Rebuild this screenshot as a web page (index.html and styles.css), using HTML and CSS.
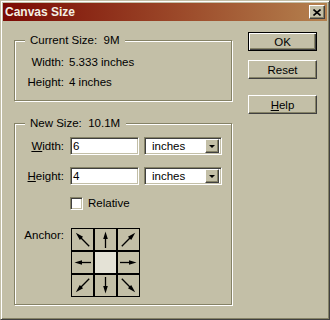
FILE: index.html
```html
<!DOCTYPE html>
<html>
<head>
<meta charset="utf-8">
<link rel="stylesheet" href="styles.css">
</head>
<body>
<div class="window">
  <div class="titlebar">
    <span class="title">Canvas Size</span>
    <span class="close"><svg width="8" height="7" viewBox="0 0 8 7"><path d="M0.5 0.5 L7.5 6.5 M7.5 0.5 L0.5 6.5" stroke="#000" stroke-width="1.6" fill="none"/></svg></span>
  </div>
  <div class="main">
    <div class="left">
      <div class="group">
        <div class="legend">Current Size:&nbsp; 9M</div>
        <div class="info">
          <span class="lbl">Width:</span><span>5.333 inches</span>
          <span class="lbl">Height:</span><span>4 inches</span>
        </div>
      </div>
      <div class="group">
        <div class="legend">New Size:&nbsp; 10.1M</div>
        <div class="form">
          <div class="row">
            <span class="lbl"><u>W</u>idth:</span>
            <div class="field">6</div>
            <div class="select"><span class="sel-text">inches</span><span class="drop"><span class="tri"></span></span></div>
          </div>
          <div class="row r2">
            <span class="lbl"><u>H</u>eight:</span>
            <div class="field">4</div>
            <div class="select"><span class="sel-text">inches</span><span class="drop"><span class="tri"></span></span></div>
          </div>
          <div class="row r3">
            <span class="lbl"></span>
            <span class="checkbox"></span><span>Relative</span>
          </div>
          <div class="row r4">
            <span class="lbl">Anchor:</span>
            <div class="anchor">
              <div class="cell"><svg viewBox="0 0 21 21"><g transform="rotate(-45 10.5 10.5)"><path d="M10.5 20 V6" stroke="#000" stroke-width="1.3"/><path d="M10.5 1 L12.8 9 L8.2 9 Z" fill="#000"/></g></svg></div>
              <div class="cell"><svg viewBox="0 0 21 21"><path d="M10.5 19 V7" stroke="#000" stroke-width="1.3"/><path d="M10.5 2.5 L12.8 10 L8.2 10 Z" fill="#000"/></svg></div>
              <div class="cell"><svg viewBox="0 0 21 21"><g transform="rotate(45 10.5 10.5)"><path d="M10.5 20 V6" stroke="#000" stroke-width="1.3"/><path d="M10.5 1 L12.8 9 L8.2 9 Z" fill="#000"/></g></svg></div>
              <div class="cell"><svg viewBox="0 0 21 21"><g transform="rotate(-90 10.5 10.5)"><path d="M10.5 19 V7" stroke="#000" stroke-width="1.3"/><path d="M10.5 2.5 L12.8 10 L8.2 10 Z" fill="#000"/></g></svg></div>
              <div class="cell center"></div>
              <div class="cell"><svg viewBox="0 0 21 21"><g transform="rotate(90 10.5 10.5)"><path d="M10.5 19 V7" stroke="#000" stroke-width="1.3"/><path d="M10.5 2.5 L12.8 10 L8.2 10 Z" fill="#000"/></g></svg></div>
              <div class="cell"><svg viewBox="0 0 21 21"><g transform="rotate(-135 10.5 10.5)"><path d="M10.5 20 V6" stroke="#000" stroke-width="1.3"/><path d="M10.5 1 L12.8 9 L8.2 9 Z" fill="#000"/></g></svg></div>
              <div class="cell"><svg viewBox="0 0 21 21"><g transform="rotate(180 10.5 10.5)"><path d="M10.5 19 V7" stroke="#000" stroke-width="1.3"/><path d="M10.5 2.5 L12.8 10 L8.2 10 Z" fill="#000"/></g></svg></div>
              <div class="cell"><svg viewBox="0 0 21 21"><g transform="rotate(135 10.5 10.5)"><path d="M10.5 20 V6" stroke="#000" stroke-width="1.3"/><path d="M10.5 1 L12.8 9 L8.2 9 Z" fill="#000"/></g></svg></div>
            </div>
          </div>
        </div>
      </div>
    </div>
    <div class="buttons">
      <button class="btn default">OK</button>
      <button class="btn reset">Reset</button>
      <button class="btn help"><u>H</u>elp</button>
    </div>
  </div>
</div>
</body>
</html>
```

FILE: styles.css
```css
* { box-sizing: border-box; }

body {
  margin: 0;
  font-family: "Liberation Sans", Arial, sans-serif;
  font-size: 11.5px;
  color: #000;
  background: #c3bfa7;
}

.window {
  width: 330px;
  height: 320px;
  background: #c3bfa7;
  border: 1px solid;
  border-color: #c3bfa7 #404040 #404040 #c3bfa7;
  box-shadow: inset 1px 1px #fff, inset -1px -1px #858266;
  padding: 2px;
  display: flex;
  flex-direction: column;
}

.titlebar {
  height: 18px;
  background: linear-gradient(to right, #7b0a04, #9c4a2a 55%, #b4814e);
  display: flex;
  align-items: center;
  justify-content: space-between;
  padding: 0 2px;
}

.title {
  color: #f4f0e4;
  font-weight: bold;
  font-size: 12px;
}

.close {
  width: 16px;
  height: 14px;
  background: #c3bfa7;
  border: 1px solid;
  border-color: #fff #404040 #404040 #fff;
  box-shadow: inset -1px -1px #858266;
  display: flex;
  align-items: center;
  justify-content: center;
}

.close svg { display: block; }

.main {
  display: flex;
  gap: 16px;
  padding: 11px 0 0 11px;
}

.left {
  width: 218px;
  padding-top: 8px;
  display: flex;
  flex-direction: column;
  gap: 22px;
}

.group {
  border: 1px solid #858266;
  box-shadow: inset 1px 1px #fff, 1px 1px #fff;
}

.legend {
  margin: -8px 0 0 10px;
  padding: 0 6px 0 5px;
  background: #c3bfa7;
  width: max-content;
  line-height: 14px;
}

.info {
  display: grid;
  grid-template-columns: 49px auto;
  column-gap: 5px;
  row-gap: 6px;
  margin-top: 8px;
  padding-bottom: 11px;
  line-height: 14px;
}

.lbl { text-align: right; }

.form {
  display: flex;
  flex-direction: column;
  margin-top: 7px;
  padding-bottom: 7px;
}

.row {
  display: flex;
  align-items: center;
  line-height: 14px;
}

.row .lbl {
  width: 49px;
  margin-right: 6px;
  flex: none;
}

.r2 { margin-top: 12px; }
.r3 { margin-top: 11px; }
.r4 { margin-top: 18px; align-items: flex-start; }

.field {
  width: 69px;
  height: 18px;
  background: #fff;
  border: 1px solid;
  border-color: #858266 #fff #fff #858266;
  box-shadow: inset 1px 1px #404040, inset -1px -1px #c3bfa7;
  padding: 0 2px 0 2px;
  line-height: 16px;
  margin-right: 5px;
}

.select {
  width: 78px;
  height: 18px;
  background: #fff;
  border: 1px solid;
  border-color: #858266 #fff #fff #858266;
  box-shadow: inset 1px 1px #404040, inset -1px -1px #c3bfa7;
  padding: 2px;
  display: flex;
  align-items: center;
}

.sel-text {
  flex: 1;
  padding-left: 5px;
}

.drop {
  width: 14px;
  height: 14px;
  background: #c3bfa7;
  border: 1px solid;
  border-color: #fff #404040 #404040 #fff;
  box-shadow: inset -1px -1px #858266;
  display: flex;
  align-items: center;
  justify-content: center;
}

.tri {
  width: 0;
  height: 0;
  border-left: 3px solid transparent;
  border-right: 3px solid transparent;
  border-top: 3px solid #000;
  margin-top: 1px;
}

.checkbox {
  width: 13px;
  height: 13px;
  background: #fff;
  border: 1px solid;
  border-color: #858266 #fff #fff #858266;
  box-shadow: inset 1px 1px #404040, inset -1px -1px #c3bfa7;
  margin-right: 5px;
}

.anchor {
  margin-left: 1px;
  display: grid;
  grid-template-columns: repeat(3, 21px);
  grid-template-rows: repeat(3, 21px);
  gap: 2px;
  background: #000;
  border: 1px solid #000;
}

.cell { background: #c3bfa7; }
.cell svg { display: block; width: 21px; height: 21px; }
.cell.center { background: #e4e2d6; }

.buttons {
  display: flex;
  flex-direction: column;
  width: 69px;
}

.btn {
  width: 69px;
  height: 19px;
  background: #c3bfa7;
  border: 1px solid;
  border-color: #fff #404040 #404040 #fff;
  box-shadow: inset -1px -1px #858266;
  font: inherit;
  color: #000;
  padding: 0;
}

.btn.default {
  border-color: #000;
  box-shadow: inset 1px 1px #fff, inset -1px -1px #404040, inset -2px -2px #858266;
}

.reset { margin-top: 9px; }
.help { margin-top: 16px; }
```
